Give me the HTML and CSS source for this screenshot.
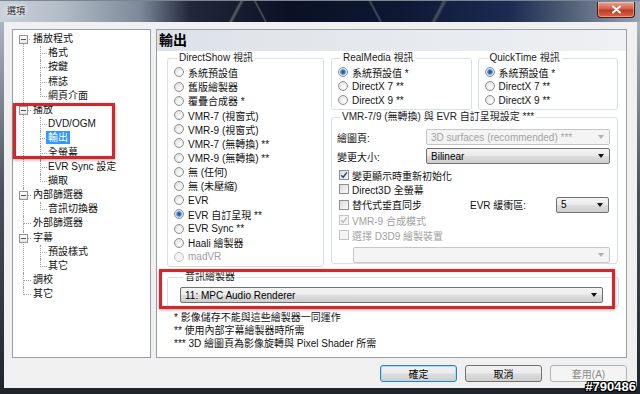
FILE: index.html
```
<!DOCTYPE html>
<html lang="zh-Hant">

<head>
  <meta charset="UTF-8">
  <title>選項</title>
  <link rel="stylesheet" href="styles.css">
</head>

<body>
  <div class="window">
    <div class="titlebar">
      <span class="title">選項</span>
      <span class="close">
        <svg width="11" height="9" viewBox="0 0 11 9"><path d="M2 1.5 L9 7.5 M9 1.5 L2 7.5" stroke="#fff" stroke-width="2" stroke-linecap="round" fill="none"/></svg>
      </span>
    </div>

    <div class="frame">
      <div class="client">
        <div class="main">

          <div class="tree">
            <ul class="root">
              <li><span class="toggle"></span><span class="node">播放程式</span>
                <ul class="sub">
                  <li><span class="node">格式</span></li>
                  <li><span class="node">按鍵</span></li>
                  <li><span class="node">標誌</span></li>
                  <li><span class="node">網頁介面</span></li>
                </ul>
              </li>
              <li><span class="toggle"></span><span class="node">播放</span>
                <ul class="sub">
                  <li><span class="node">DVD/OGM</span></li>
                  <li><span class="node"><span class="sel">輸出</span></span></li>
                  <li><span class="node">全螢幕</span></li>
                  <li><span class="node">EVR Sync 設定</span></li>
                  <li><span class="node">擷取</span></li>
                </ul>
              </li>
              <li><span class="toggle"></span><span class="node">內部篩選器</span>
                <ul class="sub">
                  <li><span class="node">音訊切換器</span></li>
                </ul>
              </li>
              <li><span class="node">外部篩選器</span></li>
              <li><span class="toggle"></span><span class="node">字幕</span>
                <ul class="sub">
                  <li><span class="node">預設樣式</span></li>
                  <li><span class="node">其它</span></li>
                </ul>
              </li>
              <li><span class="node">調校</span></li>
              <li><span class="node">其它</span></li>
            </ul>
            <div class="mark tree-mark"></div>
          </div>

          <div class="page">
            <div class="page-head">輸出</div>
            <div class="page-body">
              <div class="cols">
                <fieldset class="group ds">
                  <legend>DirectShow 視訊</legend>
                  <label class="opt"><span class="radio"></span>系統預設值</label>
                  <label class="opt"><span class="radio"></span>舊版繪製器</label>
                  <label class="opt"><span class="radio"></span>覆疊合成器 *</label>
                  <label class="opt"><span class="radio"></span>VMR-7 (視窗式)</label>
                  <label class="opt"><span class="radio"></span>VMR-9 (視窗式)</label>
                  <label class="opt"><span class="radio"></span>VMR-7 (無轉換) **</label>
                  <label class="opt"><span class="radio"></span>VMR-9 (無轉換) **</label>
                  <label class="opt"><span class="radio"></span>無 (任何)</label>
                  <label class="opt"><span class="radio"></span>無 (未壓縮)</label>
                  <label class="opt"><span class="radio"></span>EVR</label>
                  <label class="opt"><span class="radio on"></span>EVR 自訂呈現 **</label>
                  <label class="opt"><span class="radio"></span>EVR Sync **</label>
                  <label class="opt"><span class="radio"></span>Haali 繪製器</label>
                  <label class="opt off"><span class="radio"></span>madVR</label>
                </fieldset>

                <div class="side">
                  <div class="pair">
                    <fieldset class="group small-group">
                      <legend>RealMedia 視訊</legend>
                      <label class="opt"><span class="radio on"></span>系統預設值 *</label>
                      <label class="opt"><span class="radio"></span>DirectX 7 **</label>
                      <label class="opt"><span class="radio"></span>DirectX 9 **</label>
                    </fieldset>
                    <fieldset class="group small-group">
                      <legend>QuickTime 視訊</legend>
                      <label class="opt"><span class="radio on"></span>系統預設值 *</label>
                      <label class="opt"><span class="radio"></span>DirectX 7 **</label>
                      <label class="opt"><span class="radio"></span>DirectX 9 **</label>
                    </fieldset>
                  </div>

                  <fieldset class="group vmr">
                    <legend>VMR-7/9 (無轉換) 與 EVR 自訂呈現設定 ***</legend>
                    <div class="field">
                      <span class="lbl">繪圖頁:</span>
                      <div class="combo off">3D surfaces (recommended) ***<span class="arrow"></span></div>
                    </div>
                    <div class="field">
                      <span class="lbl">變更大小:</span>
                      <div class="combo">Bilinear<span class="arrow"></span></div>
                    </div>
                    <div class="checks">
                      <label class="chk"><span class="box"><svg width="8" height="8" viewBox="0 0 8 8"><path d="M1.2 4.2 L3.2 6.3 L6.9 1.4" stroke="#2c4a8a" stroke-width="1.5" fill="none"/></svg></span>變更顯示時重新初始化</label>
                      <label class="chk"><span class="box"></span>Direct3D 全螢幕</label>
                      <div class="chk evr">
                        <span class="chk-part"><span class="box"></span>替代式垂直同步</span>
                        <span class="evr-lbl">EVR 緩衝區:</span>
                        <div class="combo buf">5<span class="arrow"></span></div>
                      </div>
                      <label class="chk off"><span class="box"><svg width="8" height="8" viewBox="0 0 8 8"><path d="M1.2 4.2 L3.2 6.3 L6.9 1.4" stroke="#b4b4b4" stroke-width="1.3" fill="none"/></svg></span>VMR-9 合成模式</label>
                      <label class="chk off"><span class="box"></span>選擇 D3D9 繪製裝置</label>
                    </div>
                    <div class="combo off device"><span class="arrow"></span></div>
                  </fieldset>
                </div>
              </div>

              <div class="audio">
                <fieldset class="group">
                  <legend>音訊繪製器</legend>
                  <div class="combo">11: MPC Audio Renderer<span class="arrow"></span></div>
                </fieldset>
                <div class="mark audio-mark"></div>
              </div>

              <div class="notes">
                <p>* 影像儲存不能與這些繪製器一同運作</p>
                <p>** 使用內部字幕繪製器時所需</p>
                <p>*** 3D 繪圖頁為影像旋轉與 Pixel Shader 所需</p>
              </div>
            </div>
          </div>
        </div>

        <div class="buttons">
          <button class="btn default">確定</button>
          <button class="btn">取消</button>
          <button class="btn" disabled>套用(A)</button>
        </div>
      </div>
    </div>

    <div class="tag">#790486</div>
  </div>
</body>

</html>
```

FILE: styles.css
```
* {
  box-sizing: border-box;
}

body {
  margin: 0;
  width: 640px;
  height: 394px;
  overflow: hidden;
  background: #1d2229;
  font-family: "Liberation Sans", "Noto Sans CJK TC", sans-serif;
  font-size: 10px;
  color: #111;
}

.window {
  position: relative;
  height: 394px;
  display: flex;
  flex-direction: column;
}

/* Aero title bar */
.titlebar {
  height: 22px;
  display: flex;
  align-items: flex-start;
  border-top: 1px solid #7b8592;
  background:
    linear-gradient(118deg, transparent 44%, rgba(170, 180, 170, 0.45) 48%, transparent 53%) 212px 0 / 50px 22px no-repeat,
    linear-gradient(62deg, transparent 44%, rgba(170, 180, 170, 0.4) 49%, transparent 54%) 250px 0 / 22px 22px no-repeat,
    linear-gradient(62deg, transparent 44%, rgba(170, 180, 170, 0.35) 49%, transparent 54%) 362px 0 / 28px 22px no-repeat,
    linear-gradient(118deg, transparent 44%, rgba(170, 180, 170, 0.35) 48%, transparent 53%) 410px 0 / 60px 22px no-repeat,
    linear-gradient(to right, #c9d1da 0, #b3bdc8 60px, #7d8999 140px, #202839 190px, #0a1124 290px, #0e1834 400px, #1c2b52 510px, #56647a 575px, #98a3b1 640px);
}

.title {
  margin: 4px 0 0 7px;
  font-size: 9px;
  line-height: 12px;
  color: #1a1a1a;
  text-shadow: 0 0 4px #fff, 0 0 7px #fff;
}

.close {
  margin: 1px 5px 0 auto;
  width: 38px;
  height: 16px;
  display: flex;
  align-items: center;
  justify-content: center;
  border: 1px solid #4d1a12;
  border-top: none;
  border-radius: 0 0 4px 4px;
  background: linear-gradient(#e8a593, #d2604a 45%, #c0391f 55%, #d6694f);
  box-shadow: inset 0 0 0 1px rgba(255, 255, 255, 0.35);
}

.frame {
  flex: 1;
  padding: 0 3px 6px 4px;
  background: linear-gradient(#aab4bf, #4a525d 45%, #1f242b);
}

.client {
  height: 100%;
  background: #f0f0f0;
  padding: 7px 10px 0 8px;
}

.main {
  display: flex;
  gap: 5px;
  height: 329px;
}

/* tree */
.tree {
  position: relative;
  width: 139px;
  background: #fff;
  border: 1px solid #9a9ea6;
  padding-top: 2px;
}

.tree ul {
  list-style: none;
  margin: 0;
  padding: 0;
}

.tree li {
  position: relative;
}

.node {
  display: block;
  height: 14.2px;
  line-height: 14.2px;
  padding-left: 20px;
  white-space: nowrap;
}

.sub .node {
  padding-left: 35px;
}

.root > li::before,
.sub > li::before {
  content: "";
  position: absolute;
  left: 10px;
  top: 0;
  width: 7px;
  height: 7px;
  border-left: 1px dotted #a0a0a0;
  border-bottom: 1px dotted #a0a0a0;
}

.root > li:first-child::before {
  border-left: none;
}

.root > li::after,
.sub > li::after {
  content: "";
  position: absolute;
  left: 10px;
  top: 7px;
  bottom: 0;
  border-left: 1px dotted #a0a0a0;
}

.root > li:last-child::after,
.sub > li:last-child::after {
  display: none;
}

.sub > li::before,
.sub > li::after {
  left: 27px;
}

.sub > li::before {
  width: 6px;
}

.toggle {
  position: absolute;
  z-index: 1;
  left: 6px;
  top: 3px;
  width: 9px;
  height: 9px;
  border: 1px solid #929292;
  background: linear-gradient(#555, #555) center / 5px 1px no-repeat, linear-gradient(#fff, #e6e6e6);
}

.sel {
  display: inline-block;
  margin-left: -2px;
  padding: 0 2px;
  line-height: 13px;
  background: #3399ff;
  color: #fff;
}

/* red marks over the screenshot */
.mark {
  position: absolute;
  border: 3px solid #d3272b;
  box-shadow: 0 1px 3px rgba(0, 0, 0, 0.35), inset 0 0 2px rgba(0, 0, 0, 0.2);
}

.tree-mark {
  left: 0;
  top: 73px;
  width: 102px;
  height: 56px;
}

/* options page */
.page {
  flex: 1;
  background: #fff;
  border: 1px solid #9a9ea6;
}

.page-head {
  height: 21px;
  line-height: 21px;
  padding-left: 2px;
  font-size: 14px;
  font-weight: bold;
  color: #000;
  background: linear-gradient(to right, #dde2e8, #eef0f3);
}

.page-body {
  padding: 1px 7px 0 10px;
}

.cols {
  display: flex;
  gap: 7px;
}

.group {
  margin: 0;
  min-width: 0;
  padding: 1px 6px 2px 6px;
  border: 1px solid #d5dfe5;
  border-radius: 3px;
}

.group legend {
  margin-left: 3px;
  padding: 0 2px;
  line-height: 12px;
  color: #1a1a1a;
}

.ds {
  width: 157px;
  padding-top: 1.4px;
}

.side {
  width: 287px;
}

.pair {
  display: flex;
  gap: 6px;
}

.small-group {
  flex: 1;
  padding-left: 6px;
}

.opt {
  display: flex;
  align-items: center;
  gap: 4px;
  height: 14.2px;
  white-space: nowrap;
}

.small-group .opt {
  height: 14px;
}

.radio {
  flex: none;
  width: 10px;
  height: 10px;
  border: 1px solid #8e8f8f;
  border-radius: 50%;
  background: radial-gradient(circle at 60% 65%, #fefefe, #d9d9d9);
}

.radio.on {
  background: radial-gradient(circle, #1f4e94 0, #3b7cc6 2px, #c9dcee 3.2px, #f6f6f6 4.5px);
}

.opt.off {
  color: #a0a0a0;
}

.opt.off .radio {
  border-color: #c2c2c2;
  background: #f4f4f4;
}

.vmr {
  margin-top: 1px;
  padding: 0 7px 0 5px;
}

.field {
  display: grid;
  grid-template-columns: 89px 1fr;
  align-items: center;
  margin-top: 6px;
}

.field + .field {
  margin-top: 3px;
}

.combo {
  display: flex;
  align-items: center;
  height: 16px;
  padding-left: 4px;
  border: 1px solid #707070;
  border-radius: 2px;
  color: #000;
  white-space: nowrap;
  background: linear-gradient(#f3f3f3, #ebebeb 48%, #dddddd 52%, #cfcfcf);
}

.arrow {
  margin-left: auto;
  margin-right: 5px;
  border-left: 3.5px solid transparent;
  border-right: 3.5px solid transparent;
  border-top: 4px solid #111;
}

.combo.off {
  color: #a3a3a3;
  border-color: #c6c6c6;
  background: #f4f4f4;
}

.combo.off .arrow {
  border-top-color: #b0b0b0;
}

.checks {
  margin-top: 4px;
  padding-left: 2px;
}

.chk {
  display: flex;
  align-items: center;
  gap: 3px;
  height: 14px;
  white-space: nowrap;
}

.box {
  flex: none;
  display: flex;
  align-items: center;
  justify-content: center;
  width: 10px;
  height: 10px;
  border: 1px solid #8f8f8f;
  background: linear-gradient(135deg, #dcdcdc, #fbfbfb);
}

.chk.off {
  color: #a0a0a0;
}

.chk.off .box {
  border-color: #c4c4c4;
  background: #f4f4f4;
}

.evr {
  height: 17px;
  gap: 0;
}

.chk-part {
  display: flex;
  align-items: center;
  gap: 3px;
  width: 131px;
}

.evr-lbl {
  width: 86px;
}

.buf {
  width: 53px;
}

.evr + .chk {
  margin-top: 0;
}

.checks .chk:last-child {
  margin-top: 1px;
}

.device {
  margin: 5px 0 0 16px;
}

.audio {
  position: relative;
  margin-top: 4px;
}

.audio .group {
  padding: 4px 15px 3px 12px;
}

.audio-mark {
  left: -8px;
  top: -2px;
  width: 456px;
  height: 40px;
}

.notes {
  margin-top: 4px;
  padding-left: 7px;
}

.notes p {
  margin: 0;
  line-height: 13px;
}

/* dialog buttons */
.buttons {
  display: flex;
  justify-content: flex-end;
  gap: 8px;
  margin-top: 7px;
}

.btn {
  width: 77px;
  height: 17px;
  padding: 0;
  font: inherit;
  color: #000;
  border: 1px solid #707070;
  border-radius: 3px;
  background: linear-gradient(#f2f2f2, #ebebeb 48%, #dddddd 52%, #cfcfcf);
}

.btn.default {
  border-color: #3c7fb1;
  box-shadow: inset 0 0 0 1px #a6dcf6;
}

.btn:disabled {
  color: #8a8a8a;
  border-color: #adb2b5;
  background: #f4f4f4;
}

.tag {
  position: absolute;
  right: 4px;
  bottom: 0;
  font-size: 13px;
  font-weight: bold;
  line-height: 14px;
  color: #fff;
  text-shadow: 1px 0 0 #000, -1px 0 0 #000, 0 1px 0 #000, 0 -1px 0 #000, 1px 1px 0 #000, -1px -1px 0 #000, 1px -1px 0 #000, -1px 1px 0 #000;
}
```
